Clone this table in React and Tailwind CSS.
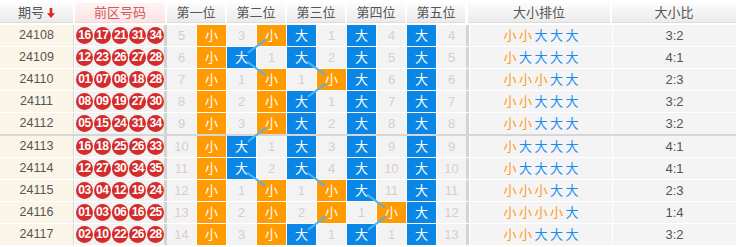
import React from "react";

const rows = [
  { no: "24108", balls: ["16", "17", "21", "31", "34"], miss: [5, 3, 1, 4, 4], ratio: "3:2" },
  { no: "24109", balls: ["12", "23", "26", "27", "28"], miss: [6, 1, 2, 5, 5], ratio: "4:1" },
  { no: "24110", balls: ["01", "07", "08", "18", "28"], miss: [7, 1, 1, 6, 6], ratio: "2:3" },
  { no: "24111", balls: ["08", "09", "19", "27", "30"], miss: [8, 2, 1, 7, 7], ratio: "3:2" },
  { no: "24112", balls: ["05", "15", "24", "31", "34"], miss: [9, 3, 2, 8, 8], ratio: "3:2" },
  { no: "24113", balls: ["16", "18", "25", "26", "33"], miss: [10, 1, 3, 9, 9], ratio: "4:1" },
  { no: "24114", balls: ["12", "27", "30", "34", "35"], miss: [11, 2, 4, 10, 10], ratio: "4:1" },
  { no: "24115", balls: ["03", "04", "12", "19", "24"], miss: [12, 1, 1, 11, 11], ratio: "2:3" },
  { no: "24116", balls: ["01", "03", "06", "16", "25"], miss: [13, 2, 2, 1, 12], ratio: "1:4" },
  { no: "24117", balls: ["02", "10", "22", "26", "28"], miss: [14, 3, 1, 1, 13], ratio: "3:2" },
];

const big = (n) => parseInt(n, 10) >= 18;

const positions = ["第一位", "第二位", "第三位", "第四位", "第五位"];

// x/y centre of a 大/小 cell, relative to the body block
const cx = (k) => 167 + 30 * k + 14.5;
const cy = (i) => 22 * i + 10.5 + (i >= 5 ? 1 : 0);

function TrendLines() {
  const lines = [];
  for (let p = 0; p < 5; p++) {
    for (let i = 0; i < rows.length - 1; i++) {
      const a = big(rows[i].balls[p]) ? 2 * p : 2 * p + 1;
      const b = big(rows[i + 1].balls[p]) ? 2 * p : 2 * p + 1;
      if (a === b) continue;
      const x1 = cx(a), y1 = cy(i), x2 = cx(b), y2 = cy(i + 1);
      const len = Math.hypot(x2 - x1, y2 - y1);
      const ux = (x2 - x1) / len, uy = (y2 - y1) / len;
      lines.push(
        <line
          key={p + "-" + i}
          x1={x1 + ux * 7}
          y1={y1 + uy * 7}
          x2={x2 - ux * 8}
          y2={y2 - uy * 8}
          stroke="#4fb3ee"
          strokeWidth="2"
        />
      );
    }
  }
  return (
    <svg className="absolute top-0 left-0 pointer-events-none" width="736" height="224">
      {lines}
    </svg>
  );
}

function Ball({ n }) {
  return (
    <div className="w-[17px] h-[17px] rounded-full bg-[#d42b2b] text-white text-[12px] font-bold leading-[17px] text-center tracking-[-0.6px]">
      {n}
    </div>
  );
}

function Row({ r, i }) {
  const sep = i === 4;
  return (
    <div className={"flex h-[21px] " + (sep ? "mb-[2px] shadow-[0_2px_0_#d6d6d6]" : "mb-px")}>
      <div className="w-[74px] border-r border-[#d6d6d6] bg-[#faf5e6] flex items-center justify-center text-[12.5px] text-[#555]">
        {r.no}
      </div>
      <div className="ml-px w-[92px] border-r-[3px] border-[#d3d3d3] bg-[#f2f2f2] flex items-center gap-[1px] pl-px">
        {r.balls.map((b, j) => (
          <Ball key={j} n={b} />
        ))}
      </div>
      {r.balls.map((b, p) => {
        const isBig = big(b);
        return (
          <React.Fragment key={p}>
            {isBig ? (
              <div className="w-[29px] mr-px bg-[#0a87e6] text-white text-[13px] flex items-center justify-center">大</div>
            ) : (
              <div className="w-[29px] mr-px bg-[#f3f3f3] text-[#dccad5] text-[13px] flex items-center justify-center">{r.miss[p]}</div>
            )}
            {isBig ? (
              <div className={"w-[29px] bg-[#f3f3f3] text-[#dccad5] text-[13px] flex items-center justify-center " + (p < 4 ? "mr-px" : "")}>{r.miss[p]}</div>
            ) : (
              <div className={"w-[29px] bg-[#ff9a00] text-white text-[13px] flex items-center justify-center " + (p < 4 ? "mr-px" : "")}>小</div>
            )}
          </React.Fragment>
        );
      })}
      <div className="w-[3px] bg-[#d3d3d3]" />
      <div className="ml-px w-[142px] bg-[#f4f4f4] flex items-center justify-center gap-[2.5px] text-[13px]">
        {r.balls.map((b, j) =>
          big(b) ? (
            <span key={j} className="text-[#1a8cf0]">大</span>
          ) : (
            <span key={j} className="text-[#ff9a1a]">小</span>
          )
        )}
      </div>
      <div className="ml-px flex-1 bg-[#f4f4f4] flex items-center justify-center text-[13px] text-[#555]">{r.ratio}</div>
    </div>
  );
}

export default function App() {
  return (
    <div className="w-[736px] h-[247px] overflow-hidden bg-white font-['Liberation_Sans','Noto_Sans_CJK_SC',sans-serif]">
      {/* HEADER */}
      <div className="flex pt-[3px] pb-[2px] h-[25px] text-[13px] text-[#555]">
        <div className="w-[73px] bg-linear-to-b from-[#fcfcfc] to-[#ebebeb] border-b border-[#dcdcdc] flex items-center justify-center gap-[3px]">
          <span>期号</span>
          <svg width="8" height="10" viewBox="0 0 8 10">
            <path d="M2.7 0h2.6v5.3H8L4 10 0 5.3h2.7z" fill="#e02222" />
          </svg>
        </div>
        <div className="ml-[2px] w-[90px] bg-linear-to-b from-[#fff3f3] to-[#fce3e4] border-b border-[#f0d6d8] flex items-center justify-center text-[#d05a5e]">
          前区号码
        </div>
        {positions.map((t) => (
          <div key={t} className="ml-[2px] w-[58px] bg-linear-to-b from-[#fcfcfc] to-[#ebebeb] border-b border-[#dcdcdc] flex items-center justify-center">
            {t}
          </div>
        ))}
        <div className="ml-[3px] w-[142px] bg-linear-to-b from-[#fcfcfc] to-[#ebebeb] border-b border-[#dcdcdc] flex items-center justify-center">
          大小排位
        </div>
        <div className="ml-[2px] flex-1 bg-linear-to-b from-[#fcfcfc] to-[#ebebeb] border-b border-[#dcdcdc] flex items-center justify-center">
          大小比
        </div>
      </div>

      {/* BODY */}
      <div className="relative">
        {rows.map((r, i) => (
          <Row key={r.no} r={r} i={i} />
        ))}
        <TrendLines />
      </div>
    </div>
  );
}
